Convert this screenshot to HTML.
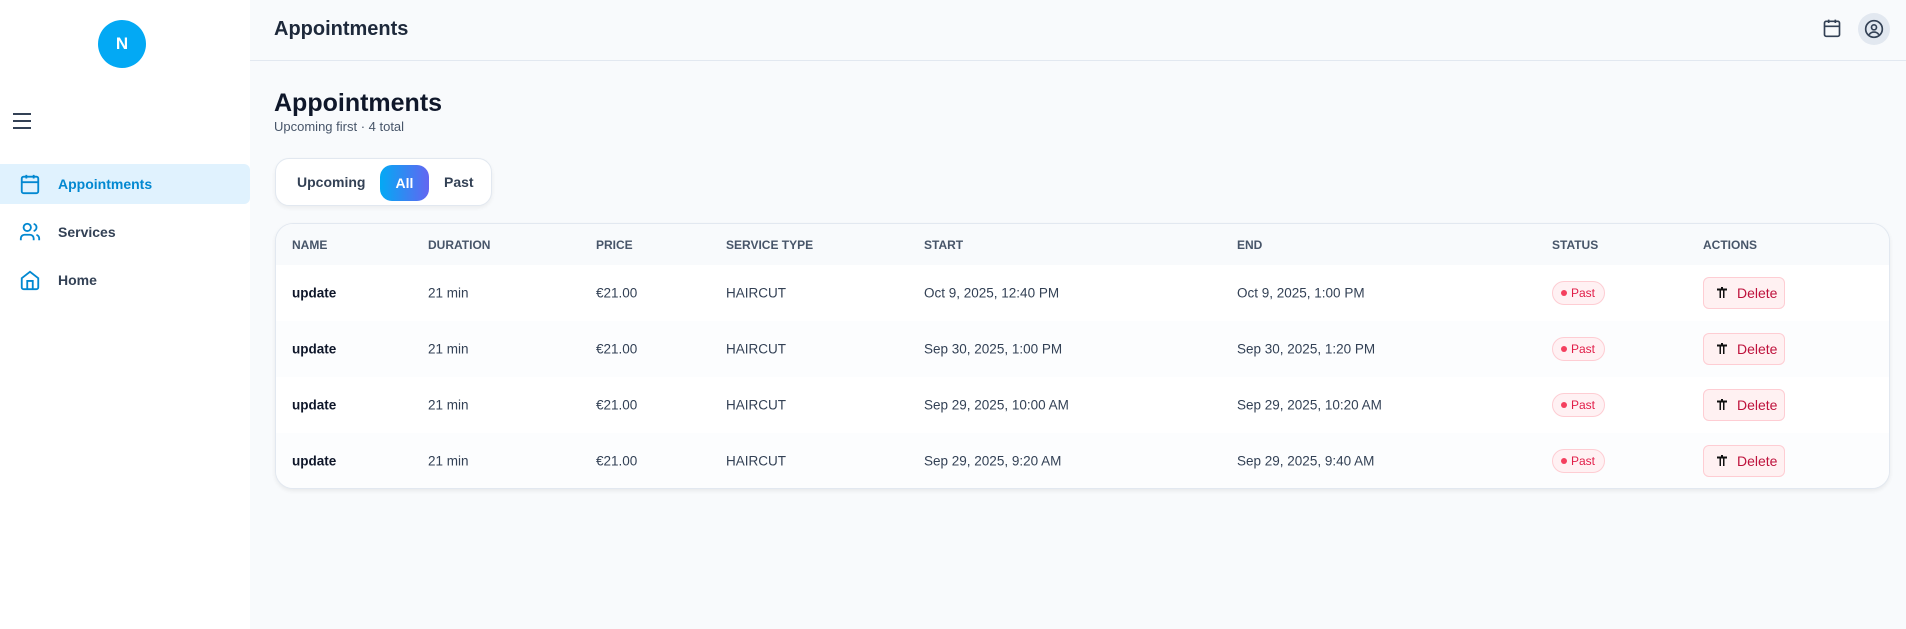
<!DOCTYPE html>
<html><head><meta charset="utf-8"><style>
*{box-sizing:border-box;margin:0;padding:0}
body{width:1906px;height:629px;overflow:hidden;font-family:"Liberation Sans",sans-serif;background:#f8fafc;color:#0f172a;position:relative}
.side{position:absolute;left:0;top:0;width:250px;height:629px;background:#fff}
.av{position:absolute;left:98px;top:20px;width:48px;height:48px;border-radius:50%;background:#03a9f4;color:#fff;font-weight:bold;font-size:17px;display:flex;align-items:center;justify-content:center}
.ham{position:absolute;left:13px;top:113px;width:18px}
.ham i{display:block;height:2px;background:#334155;margin-bottom:5px}
.nav{position:absolute;left:0;width:250px;height:40px;display:flex;align-items:center;font-size:14px;font-weight:bold;color:#334155}
.nav svg{position:absolute;left:19px}
.nav span{position:absolute;left:58px}
.nav.act{background:#e0f2fe;color:#0288d1;border-radius:0 6px 6px 0}
.hdr{position:absolute;left:250px;top:0;right:0;height:61px;border-bottom:1px solid #e2e8f0}
.hdr h2{position:absolute;left:24px;top:18px;font-size:20px;font-weight:bold;color:#1e293b}
.uc{position:absolute;left:1858px;top:13px;width:32px;height:32px;border-radius:50%;background:#e2e8f0;display:flex;align-items:center;justify-content:center}
h1{position:absolute;left:274px;top:89px;font-size:25px;font-weight:bold}
.sub{position:absolute;left:274px;top:119px;font-size:13px;color:#475569}
.seg{position:absolute;left:275px;top:158px;width:217px;height:48px;background:#fff;border:1px solid #e2e8f0;border-radius:14px;box-shadow:0 2px 4px rgba(0,0,0,.06);font-size:14px;font-weight:bold;color:#334155}
.seg span{position:absolute;top:15px}
.all{position:absolute;left:104px;top:6px;width:49px;height:36px;border-radius:12px;background:linear-gradient(90deg,#03a9f4,#6366f1);color:#fff;display:flex;align-items:center;justify-content:center}
.card{position:absolute;left:275px;top:223px;width:1615px;height:266px;background:#fff;border:1px solid #e2e8f0;border-radius:18px;box-shadow:0 2px 4px rgba(0,0,0,.07);overflow:hidden}
.row{position:absolute;left:0;width:100%;height:56px;font-size:13.5px;color:#334155}
.row.h{top:0;height:41px;background:#f8fafc;font-size:12px;color:#475569;font-weight:bold}
.row.alt{background:#fcfdfe}
.row div{position:absolute;top:50%;transform:translateY(-50%);white-space:nowrap}
.c1{left:16px}.c2{left:152px}.c3{left:320px}.c4{left:450px}.c5{left:648px}.c6{left:961px}.c7{left:1276px}.c8{left:1427px}
.nm{font-weight:bold;color:#0f172a}
.badge{height:24px;width:53px;border-radius:12px;background:#fff1f3;border:1px solid #fecdd3;color:#e11d48;font-size:12px;display:flex;align-items:center;padding-left:8px;gap:4px}
.badge b{width:6px;height:6px;border-radius:50%;background:#f43f5e}
.del{height:32px;width:82px;border-radius:6px;background:#fff1f2;border:1px solid #fecdd3;color:#be123c;font-size:14px;display:flex;align-items:center;padding-left:12px;gap:9px}
</style></head><body>
<div class="side">
 <div class="av">N</div>
 <div class="ham"><i></i><i></i><i></i></div>
 <div class="nav act" style="top:164px"><svg width="22" height="22" viewBox="0 0 24 24" fill="none" stroke="#0288d1" stroke-width="2"><rect x="3" y="4" width="18" height="18" rx="2"/><path d="M3 10h18M8 2v4M16 2v4"/></svg><span>Appointments</span></div>
 <div class="nav" style="top:212px"><svg width="22" height="22" viewBox="0 0 24 24" fill="none" stroke="#0288d1" stroke-width="2"><circle cx="9" cy="7" r="4"/><path d="M2 21v-2a4 4 0 0 1 4-4h6a4 4 0 0 1 4 4v2M16 3.1a4 4 0 0 1 0 7.8M22 21v-2a4 4 0 0 0-3-3.9"/></svg><span>Services</span></div>
 <div class="nav" style="top:260px"><svg width="22" height="22" viewBox="0 0 24 24" fill="none" stroke="#0288d1" stroke-width="2"><path d="M3 10l9-7 9 7v10a2 2 0 0 1-2 2H5a2 2 0 0 1-2-2z"/><path d="M9 22V13h6v9"/></svg><span>Home</span></div>
</div>
<div class="hdr"><h2>Appointments</h2>
 <svg style="position:absolute;left:1572px;top:18px" width="20" height="20" viewBox="0 0 24 24" fill="none" stroke="#334155" stroke-width="2"><rect x="3" y="4" width="18" height="18" rx="2"/><path d="M3 10h18M8 2v4M16 2v4"/></svg>
</div>
<div class="uc"><svg width="20" height="20" viewBox="0 0 24 24" fill="none" stroke="#334155" stroke-width="2"><circle cx="12" cy="12" r="10"/><circle cx="12" cy="10" r="3"/><path d="M6.2 18.8a7 7 0 0 1 11.6 0"/></svg></div>
<h1>Appointments</h1>
<div class="sub">Upcoming first · 4 total</div>
<div class="seg"><span style="left:21px">Upcoming</span><div class="all">All</div><span style="left:168px">Past</span></div>
<div class="card">
 <div class="row h"><div class="c1">NAME</div><div class="c2">DURATION</div><div class="c3">PRICE</div><div class="c4">SERVICE TYPE</div><div class="c5">START</div><div class="c6">END</div><div class="c7">STATUS</div><div class="c8">ACTIONS</div></div>
 <div class="row" style="top:41px"><div class="c1 nm">update</div><div class="c2">21 min</div><div class="c3">€21.00</div><div class="c4">HAIRCUT</div><div class="c5">Oct 9, 2025, 12:40 PM</div><div class="c6">Oct 9, 2025, 1:00 PM</div><div class="c7 badge"><b></b>Past</div><div class="c8 del"><svg width="12" height="12" viewBox="0 0 12 12"><path d="M1 1.5h10v2H1zM3.5 3.5h1.5V11H3.5zM7 3.5h1.5V11H7zM5 0h2v1.5H5z" fill="#111"/></svg><span>Delete</span></div></div>
 <div class="row alt" style="top:97px"><div class="c1 nm">update</div><div class="c2">21 min</div><div class="c3">€21.00</div><div class="c4">HAIRCUT</div><div class="c5">Sep 30, 2025, 1:00 PM</div><div class="c6">Sep 30, 2025, 1:20 PM</div><div class="c7 badge"><b></b>Past</div><div class="c8 del"><svg width="12" height="12" viewBox="0 0 12 12"><path d="M1 1.5h10v2H1zM3.5 3.5h1.5V11H3.5zM7 3.5h1.5V11H7zM5 0h2v1.5H5z" fill="#111"/></svg><span>Delete</span></div></div>
 <div class="row" style="top:153px"><div class="c1 nm">update</div><div class="c2">21 min</div><div class="c3">€21.00</div><div class="c4">HAIRCUT</div><div class="c5">Sep 29, 2025, 10:00 AM</div><div class="c6">Sep 29, 2025, 10:20 AM</div><div class="c7 badge"><b></b>Past</div><div class="c8 del"><svg width="12" height="12" viewBox="0 0 12 12"><path d="M1 1.5h10v2H1zM3.5 3.5h1.5V11H3.5zM7 3.5h1.5V11H7zM5 0h2v1.5H5z" fill="#111"/></svg><span>Delete</span></div></div>
 <div class="row alt" style="top:209px"><div class="c1 nm">update</div><div class="c2">21 min</div><div class="c3">€21.00</div><div class="c4">HAIRCUT</div><div class="c5">Sep 29, 2025, 9:20 AM</div><div class="c6">Sep 29, 2025, 9:40 AM</div><div class="c7 badge"><b></b>Past</div><div class="c8 del"><svg width="12" height="12" viewBox="0 0 12 12"><path d="M1 1.5h10v2H1zM3.5 3.5h1.5V11H3.5zM7 3.5h1.5V11H7zM5 0h2v1.5H5z" fill="#111"/></svg><span>Delete</span></div></div>
</div>
</body></html>
